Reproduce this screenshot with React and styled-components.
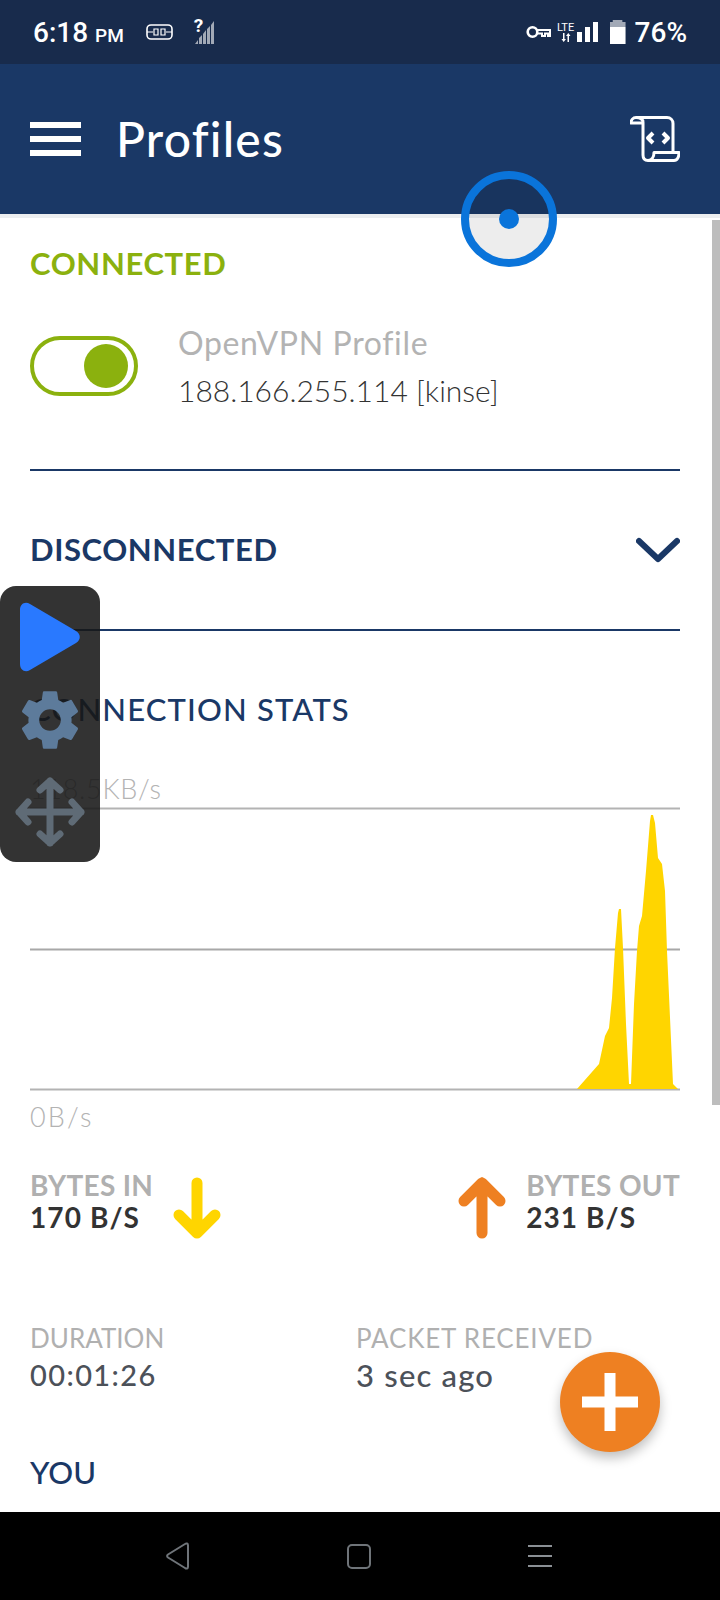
import React from "react";
import styled, { createGlobalStyle } from "styled-components";
import { MdSettings } from "react-icons/md";

const GlobalStyle = createGlobalStyle`
  html, body { margin: 0; padding: 0; background: #fff; }
  * { box-sizing: border-box; }
`;

const chartPoints =
  "577,1088 599,1063 605,1035 609,1027 612,997 615,947 618,912 619,908 621,908 623,947 626,1023 629,1083 631,1083 634,1003 637,950 639,925 642,915 646,870 650,820 651,814 653,814 655,822 658,857 662,863 665,890 667,950 673,1083 678,1088";

const App = () => {
  return (
    <Screen>
      <GlobalStyle />
      <StatusBar>
        <StatusGroup>
          <Clock>
            6:18 <small>PM</small>
          </Clock>
          <svg width="27" height="16" viewBox="0 0 27 16" fill="none" stroke="#fff" strokeWidth="1.6">
            <rect x="1" y="1" width="25" height="14" rx="4" />
            <path d="M1 8h6M20 8h6M8 5h4v6H8zM15 5h4v6h-4z" strokeWidth="1.2" />
          </svg>
          <Signal>
            <NoSim>?</NoSim>
            <svg width="22" height="26" viewBox="0 0 22 26">
              <path d="M1 25l3-4v4zM5 25v-6l3-3v9zM9 25V15l3-4v14zM13 25V10l3-3v18zM17 25V6l3-4v23z" fill="#a2a9b6" />
            </svg>
          </Signal>
        </StatusGroup>
        <StatusGroup>
          <svg width="25" height="14" viewBox="0 0 25 14" fill="none" stroke="#fff" strokeWidth="2.6">
            <circle cx="6.500" cy="7" r="4.800" />
            <path d="M11 5h13v6h-2V8.500h-3V11h-3V8.500h-5" strokeWidth="2" />
          </svg>
          <Lte>
            <span>LTE</span>
            <svg width="10" height="9" viewBox="0 0 10 9" fill="#fff">
              <path d="M2 0h1.500v6H5L2.700 9 .5 6H2zM6.500 9V3H5l2.300-3 2.200 3H8v6z" />
            </svg>
          </Lte>
          <Bars>
            <Bar $h={10} />
            <Bar $h={15} />
            <Bar $h={20} />
          </Bars>
          <Battery />
          <Percent>76%</Percent>
        </StatusGroup>
      </StatusBar>

      <Header>
        <HeaderLeft>
          <Burger>
            <i />
            <i />
            <i />
          </Burger>
          <Title>Profiles</Title>
        </HeaderLeft>
        <svg width="50" height="46" viewBox="0 0 50 46" fill="none" stroke="#fff" strokeWidth="3" strokeLinejoin="round">
          <path d="M13 7H1c0-3 2-5.500 5-5.500h31c3.500 0 6 2.500 6 6V35" />
          <path d="M6 1.500c4 0 7 1.500 7 5V39c0 3.500 2 5.500 5 5.500h26c3.500 0 5-4 5-8H24c0 4-2 8-6 8" />
          <path d="M23 17l-5 5 5 5M33 17l5 5-5 5" strokeWidth="4" />
        </svg>
      </Header>

      <Main>
        <Section $height={253}>
          <GreenHeading>CONNECTED</GreenHeading>
          <ProfileRow>
            <Toggle>
              <Knob />
            </Toggle>
            <div>
              <ProfileName>OpenVPN Profile</ProfileName>
              <ProfileAddr>188.166.255.114 [kinse]</ProfileAddr>
            </div>
          </ProfileRow>
        </Section>

        <Accordion>
          <NavyHeading>DISCONNECTED</NavyHeading>
          <svg width="44" height="26" viewBox="0 0 44 26" fill="none" stroke="#1a3866" strokeWidth="6" strokeLinecap="round" strokeLinejoin="round">
            <path d="M3 4l19 18L41 4" />
          </svg>
        </Accordion>

        <StatsHeading>CONNECTION STATS</StatsHeading>
        <AxisLabel $top={48} $spacing={0.7}>118.5KB/s</AxisLabel>
        <Chart viewBox="30 806 650 284" width="650" height="284">
          <line x1="30" x2="680" y1="807.500" y2="807.500" stroke="#b3b3b3" strokeWidth="2" />
          <line x1="30" x2="680" y1="948.500" y2="948.500" stroke="#a8a8a8" strokeWidth="2" />
          <line x1="30" x2="680" y1="1088.500" y2="1088.500" stroke="#b3b3b3" strokeWidth="2" />
          <polygon points={chartPoints} fill="#ffd500" />
        </Chart>
        <AxisLabel $top={12} $spacing={2.2}>0B/s</AxisLabel>

        <RateRow>
          <RateGroup>
            <div>
              <RateLabel>BYTES IN</RateLabel>
              <RateValue>170 B/S</RateValue>
            </div>
            <svg width="48" height="62" viewBox="0 0 48 62" fill="none" stroke="#ffd500" strokeWidth="11" strokeLinecap="round" strokeLinejoin="round">
              <path d="M24 6v50M6 38l18 18 18-18" />
            </svg>
          </RateGroup>
          <RateGroup>
            <svg width="48" height="62" viewBox="0 0 48 62" fill="none" stroke="#ee8022" strokeWidth="11" strokeLinecap="round" strokeLinejoin="round">
              <path d="M24 56V6M6 24L24 6l18 18" />
            </svg>
            <div>
              <RateLabel>BYTES OUT</RateLabel>
              <RateValue>231 B/S</RateValue>
            </div>
          </RateGroup>
        </RateRow>

        <InfoRow>
          <InfoCell>
            <InfoLabel $spacing={0}>DURATION</InfoLabel>
            <InfoValue $spacing={1.4}>00:01:26</InfoValue>
          </InfoCell>
          <InfoCell>
            <InfoLabel $spacing={0.8}>PACKET RECEIVED</InfoLabel>
            <InfoValue $size={31} $spacing={1.2}>3 sec ago</InfoValue>
          </InfoCell>
        </InfoRow>

        <YouHeading>YOU</YouHeading>

        <Scrollbar />
        <Fab>
          <svg width="56" height="58" viewBox="0 0 56 58" fill="#fff">
            <path d="M22.500 0h11v23.500H56v11H33.500V58h-11V34.500H0v-11h22.500z" />
          </svg>
        </Fab>
      </Main>

      <TouchRing>
        <TouchDot />
      </TouchRing>

      <FloatingPanel>
        <svg width="62" height="70" viewBox="0 0 62 70" fill="#2979ff">
          <path d="M1 8c0-6 5-9 10-6l46 27c5 3 5 9 0 12L11 68c-5 3-10 0-10-6z" />
        </svg>
        <GearIcon size={72} color="#5d7b9b" />
        <MoveIcon width="70" height="70" viewBox="0 0 70 70" fill="none" stroke="#5f6b76" strokeWidth="7" strokeLinecap="round" strokeLinejoin="round">
          <path d="M35 4v62M4 35h62M25 13L35 4l10 9M25 57l10 9 10-9M13 25L4 35l9 10M57 25l9 10-9 10" />
        </MoveIcon>
      </FloatingPanel>

      <NavBar>
        <svg width="25" height="28" viewBox="0 0 25 28" fill="none" stroke="#6f7479" strokeWidth="2" strokeLinejoin="round">
          <path d="M20 2c1.500-1.200 3-.5 3 1.200v21.600c0 1.700-1.500 2.400-3 1.200L3 15.500c-1.200-1-1.200-2 0-3z" />
        </svg>
        <svg width="24" height="25" viewBox="0 0 24 25" fill="none" stroke="#6f7479" strokeWidth="2">
          <rect x="1" y="1" width="22" height="23" rx="4" />
        </svg>
        <svg width="24" height="22" viewBox="0 0 24 22" fill="none" stroke="#8a8f94" strokeWidth="2">
          <path d="M0 1h24M0 11h24M0 21h24" />
        </svg>
      </NavBar>
    </Screen>
  );
};

const Screen = styled.div`
  position: relative;
  width: 720px;
  height: 1600px;
  overflow: hidden;
  display: flex;
  flex-direction: column;
  background: #fff;
  font-family: Lato, "Open Sans", sans-serif;
`;

const StatusBar = styled.div`
  height: 64px;
  flex: none;
  background: #182b4c;
  color: #fff;
  display: flex;
  align-items: center;
  justify-content: space-between;
  padding: 0 33px;
  font-family: Roboto, sans-serif;
`;

const StatusGroup = styled.div`
  display: flex;
  align-items: center;
`;

const Clock = styled.div`
  font-size: 28px;
  font-weight: 500;
  margin-right: 22px;
  small {
    font-size: 19px;
  }
`;

const Signal = styled.div`
  position: relative;
  display: flex;
  margin-left: 21px;
`;

const NoSim = styled.span`
  position: absolute;
  top: -4px;
  left: 0;
  font-size: 19px;
  font-weight: 700;
  line-height: 22px;
`;

const Lte = styled.div`
  width: 18px;
  display: flex;
  flex-direction: column;
  align-items: center;
  margin-left: 6px;
  font-size: 11px;
  line-height: 11px;
`;

const Bars = styled.div`
  display: flex;
  align-items: flex-end;
  gap: 3px;
  margin-left: 2px;
`;

const Bar = styled.div`
  width: 5px;
  height: ${(p) => p.$h}px;
  background: #fff;
`;

const Battery = styled.div`
  width: 16px;
  height: 24px;
  margin-left: 12px;
  background: linear-gradient(#a2a9b6 0 7px, #fff 7px);
  clip-path: polygon(20% 0, 80% 0, 80% 8%, 100% 8%, 100% 100%, 0 100%, 0 8%, 20% 8%);
`;

const Percent = styled.div`
  font-size: 28px;
  font-weight: 500;
  margin-left: 9px;
`;

const Header = styled.header`
  height: 150px;
  flex: none;
  background: #1a3866;
  display: flex;
  align-items: center;
  justify-content: space-between;
  padding: 0 40px 0 30px;
`;

const HeaderLeft = styled.div`
  display: flex;
  align-items: center;
  gap: 35px;
`;

const Burger = styled.div`
  width: 51px;
  display: flex;
  flex-direction: column;
  gap: 8px;
  i {
    display: block;
    height: 6px;
    background: #fff;
  }
`;

const Title = styled.h1`
  margin: 0;
  color: #fff;
  font-size: 48px;
  font-weight: 500;
  letter-spacing: 1.2px;
  line-height: 56px;
`;

const Main = styled.main`
  position: relative;
  flex: 1;
  padding: 0 40px 0 30px;
  border-top: 4px solid #eceef0;
  overflow: hidden;
`;

const Section = styled.section`
  height: ${(p) => p.$height}px;
  border-bottom: 2px solid #1a3866;
  padding-top: 27px;
`;

const GreenHeading = styled.h2`
  margin: 0;
  color: #8bb10e;
  font-size: 31px;
  font-weight: 700;
  letter-spacing: 0.65px;
  line-height: 36px;
`;

const NavyHeading = styled.h2`
  margin: 0 0 2px;
  color: #1a3866;
  font-size: 31px;
  font-weight: 700;
  letter-spacing: 0.6px;
  line-height: 36px;
`;

const ProfileRow = styled.div`
  display: flex;
  align-items: center;
  gap: 40px;
  margin-top: 55px;
  height: 60px;
`;

const Toggle = styled.div`
  width: 108px;
  height: 60px;
  flex: none;
  border: 4px solid #8bb10e;
  border-radius: 30px;
  display: flex;
  align-items: center;
  justify-content: flex-end;
  padding-right: 6px;
`;

const Knob = styled.div`
  width: 44px;
  height: 44px;
  border-radius: 50%;
  background: #8bb10e;
`;

const ProfileName = styled.div`
  color: #b3b3b3;
  font-size: 32px;
  letter-spacing: 0.65px;
  line-height: 48px;
`;

const ProfileAddr = styled.div`
  color: #333;
  font-size: 30px;
  font-weight: 300;
  line-height: 46px;
`;

const Accordion = styled.div`
  height: 160px;
  border-bottom: 2px solid #1a3866;
  display: flex;
  align-items: center;
  justify-content: space-between;
`;

const StatsHeading = styled.h2`
  margin: 60px 0 0;
  color: #1a3866;
  font-size: 31px;
  font-weight: 500;
  letter-spacing: 1.15px;
  line-height: 36px;
`;

const AxisLabel = styled.div`
  margin-top: ${(p) => p.$top}px;
  height: 0;
  line-height: 0;
  padding-top: 14px;
  color: #b3b3b3;
  font-size: 27px;
  font-weight: 300;
  letter-spacing: ${(p) => p.$spacing}px;
`;

const Chart = styled.svg`
  display: block;
  margin-top: 18px;
`;

const RateRow = styled.div`
  display: flex;
  justify-content: space-between;
  margin-top: 52px;
`;

const RateGroup = styled.div`
  display: flex;
  align-items: flex-start;
  gap: 20px;
  svg {
    margin-top: 8px;
    margin-bottom: -16px;
  }
`;

const RateLabel = styled.div`
  color: #b0b0b0;
  font-size: 28px;
  font-weight: 700;
  letter-spacing: 0.3px;
  line-height: 32px;
`;

const RateValue = styled.div`
  color: #333;
  font-size: 28px;
  font-weight: 700;
  letter-spacing: 1.1px;
  line-height: 32px;
`;

const InfoRow = styled.div`
  display: grid;
  grid-template-columns: 326px 1fr;
  margin-top: 87px;
`;

const InfoCell = styled.div`
  display: flex;
  flex-direction: column;
`;

const InfoLabel = styled.div`
  color: #b0b0b0;
  font-size: 26px;
  letter-spacing: ${(p) => p.$spacing}px;
  line-height: 36px;
`;

const InfoValue = styled.div`
  color: #4c5159;
  font-size: ${(p) => p.$size || 29}px;
  font-weight: 500;
  letter-spacing: ${(p) => p.$spacing}px;
  line-height: 38px;
`;

const YouHeading = styled.h2`
  margin: 59px 0 0;
  color: #1a3866;
  font-size: 31px;
  font-weight: 500;
  line-height: 38px;
`;

const Scrollbar = styled.div`
  position: absolute;
  top: 2px;
  right: 0;
  width: 8px;
  height: 885px;
  background: #bdbdbd;
`;

const Fab = styled.button`
  position: absolute;
  top: 1134px;
  left: 560px;
  width: 100px;
  height: 100px;
  padding: 0;
  border: none;
  border-radius: 50%;
  background: #ee8022;
  box-shadow: 0 6px 12px rgba(0, 0, 0, 0.25);
  display: flex;
  align-items: center;
  justify-content: center;
`;

const TouchRing = styled.div`
  position: absolute;
  top: 171px;
  left: 461px;
  width: 96px;
  height: 96px;
  border: 8px solid #0a74da;
  border-radius: 50%;
  background: rgba(0, 0, 0, 0.07);
  display: flex;
  align-items: center;
  justify-content: center;
`;

const TouchDot = styled.div`
  width: 20px;
  height: 20px;
  border-radius: 50%;
  background: #0a74da;
`;

const FloatingPanel = styled.div`
  position: absolute;
  top: 586px;
  left: 0;
  width: 100px;
  height: 276px;
  padding-top: 16px;
  border-radius: 16px;
  background: rgba(23, 23, 23, 0.88);
  display: flex;
  flex-direction: column;
  align-items: center;
`;

const GearIcon = styled(MdSettings)`
  margin-top: 12px;
`;

const MoveIcon = styled.svg`
  margin-top: 21px;
`;

const NavBar = styled.nav`
  height: 88px;
  flex: none;
  background: #000;
  display: flex;
  align-items: center;
  gap: 157px;
  padding-left: 165px;
`;

export default App;
